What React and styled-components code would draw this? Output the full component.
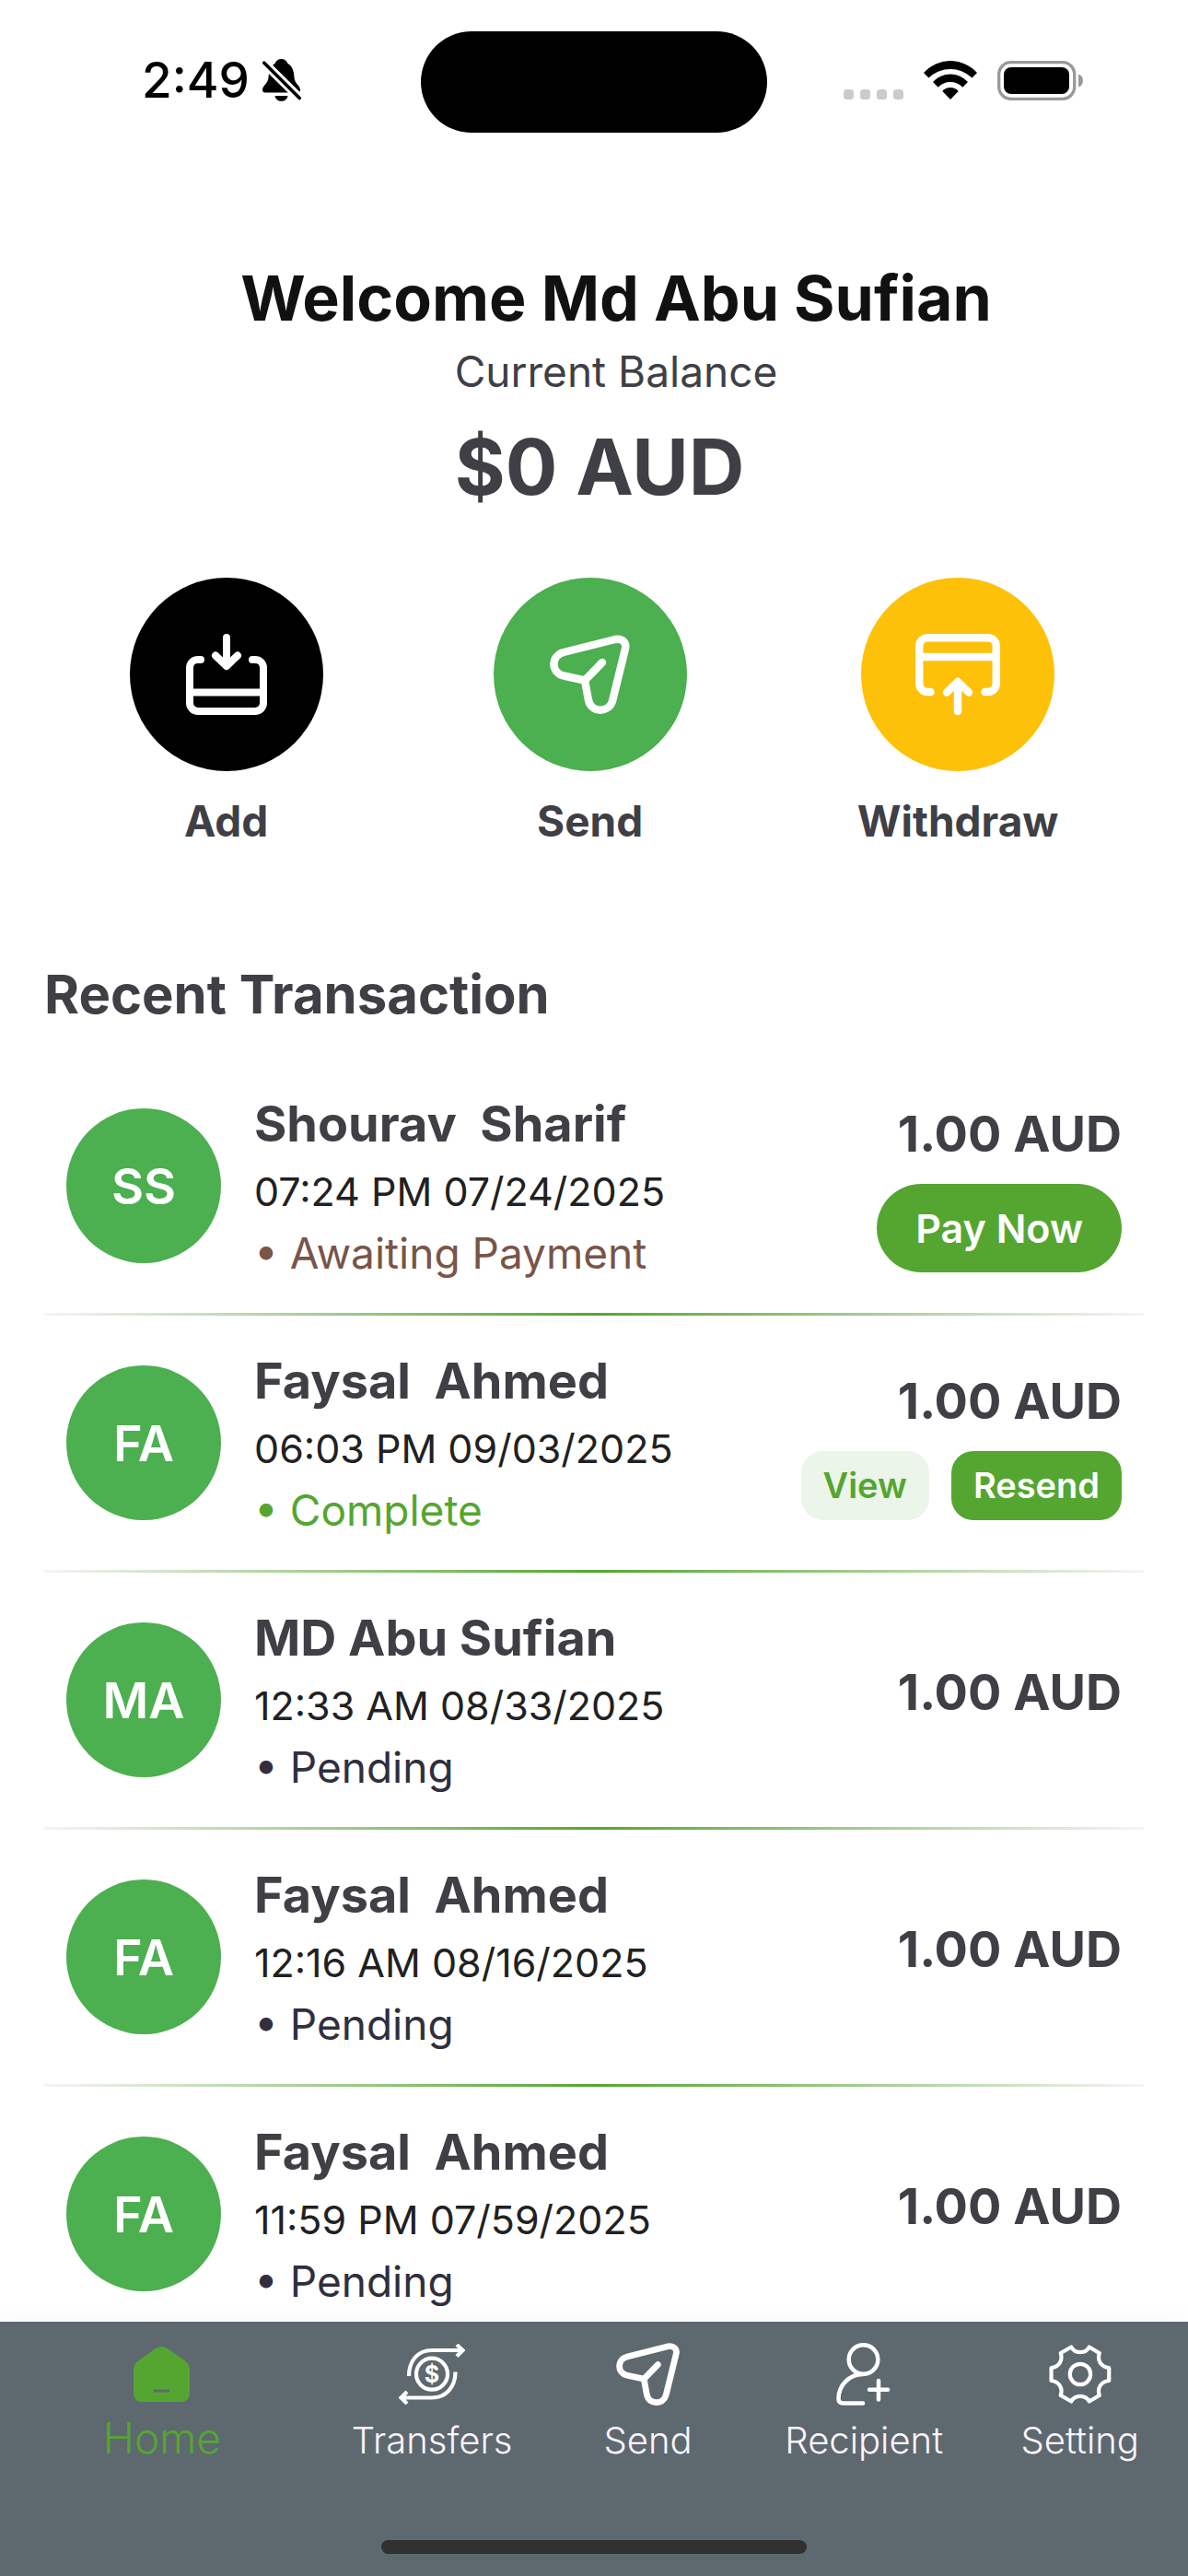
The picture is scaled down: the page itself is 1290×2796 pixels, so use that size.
import React from "react";
import styled, { createGlobalStyle } from "styled-components";

const GlobalStyle = createGlobalStyle`
  * {
    box-sizing: border-box;
  }
  body {
    margin: 0;
    background: #ffffff;
    font-family: Inter, "Liberation Sans", sans-serif;
  }
  h1, h2, h3, p, ul {
    margin: 0;
    padding: 0;
  }
  svg {
    display: block;
  }
`;

const Screen = styled.div`
  display: flex;
  flex-direction: column;
  height: 100vh;
  overflow: hidden;
  color: #3f3f46;
`;

const StatusBar = styled.header`
  display: grid;
  grid-template-columns: 1fr 376px 1fr;
  align-items: center;
  padding: 34px 0 32px;
  color: #000000;
`;

const StatusLeft = styled.div`
  display: flex;
  align-items: center;
  justify-content: flex-end;
  gap: 14px;
  padding: 0 130px 4px 0;
`;

const Clock = styled.time`
  font-size: 53px;
  line-height: 64px;
  font-weight: 500;
`;

const Island = styled.div`
  height: 110px;
  border-radius: 55px;
  background: #000000;
`;

const StatusRight = styled.div`
  display: flex;
  align-items: center;
  gap: 22px;
  padding: 0 0 4px 83px;
`;

const Content = styled.main`
  flex: 1;
  min-height: 0;
  overflow-y: auto;
  scrollbar-width: none;
`;

const Greeting = styled.section`
  display: flex;
  flex-direction: column;
  align-items: center;
  padding: 107px 0 0 48px;
`;

const Title = styled.h1`
  font-size: 68px;
  line-height: 80px;
  font-weight: 700;
  color: #111111;
  margin-bottom: 8px;
`;

const BalanceLabel = styled.p`
  font-size: 46px;
  line-height: 64px;
  margin-bottom: 16px;
`;

const BalanceValue = styled.p`
  font-size: 84px;
  line-height: 112px;
  font-weight: 700;
`;

const Actions = styled.section`
  display: flex;
  justify-content: space-around;
  padding: 64px 48px 122px;
`;

const ActionButton = styled.button`
  display: flex;
  flex-direction: column;
  align-items: center;
  gap: 24px;
  border: 0;
  padding: 0;
  background: none;
  color: inherit;
  font-family: inherit;
  font-size: 46px;
  line-height: 60px;
  font-weight: 700;
`;

const ActionCircle = styled.span`
  display: flex;
  align-items: center;
  justify-content: center;
  width: 210px;
  height: 210px;
  border-radius: 50%;
  background: ${({ $color }) => $color};
`;

const Transactions = styled.section`
  padding: 0 48px;
`;

const SectionTitle = styled.h2`
  font-size: 58px;
  line-height: 72px;
  font-weight: 700;
  margin-bottom: 34px;
`;

const List = styled.ul`
  list-style: none;
`;

const Row = styled.li`
  display: flex;
  align-items: center;
  height: 279px;
  padding: 0 24px;
  border-bottom: 3px solid;
  border-image: linear-gradient(90deg, #f5f5f5, #55a630, #f5f5f5) 1;
`;

const Avatar = styled.div`
  display: flex;
  align-items: center;
  justify-content: center;
  flex-shrink: 0;
  width: 168px;
  height: 168px;
  margin-right: 36px;
  border-radius: 50%;
  background: #4caf50;
  color: #ffffff;
  font-size: 54px;
  font-weight: 600;
`;

const Details = styled.div`
  flex: 1;
  min-width: 0;
`;

const Name = styled.h3`
  font-size: 54px;
  line-height: 76px;
  font-weight: 700;
  white-space: pre;
`;

const DateText = styled.p`
  font-size: 43px;
  line-height: 70px;
  color: #212121;
`;

const Status = styled.p`
  font-size: 46px;
  line-height: 64px;
  color: ${({ $color }) => $color};
`;

const Side = styled.div`
  display: flex;
  flex-direction: column;
  align-items: flex-end;
`;

const Amount = styled.p`
  font-size: 54px;
  line-height: 76px;
  font-weight: 700;
  padding-bottom: 16px;
`;

const ButtonGroup = styled.div`
  display: flex;
  gap: 24px;
`;

const PillButton = styled.button`
  height: 96px;
  padding: 0 42px;
  border: 0;
  border-radius: 48px;
  background: #55a630;
  color: #ffffff;
  font-family: inherit;
  font-size: 43px;
  font-weight: 600;
`;

const SmallButton = styled.button`
  height: 75px;
  padding: 0 24px;
  border: 0;
  border-radius: 24px;
  background: ${({ $soft }) => ($soft ? "#ecf5e9" : "#55a630")};
  color: ${({ $soft }) => ($soft ? "#55a630" : "#ffffff")};
  font-family: inherit;
  font-size: 38px;
  font-weight: 600;
`;

const BottomBar = styled.footer`
  background: #5d696f;
  box-shadow: 0 -4px 24px rgba(0, 0, 0, 0.03);
  padding: 21px 0 24px;
  z-index: 1;
`;

const Tabs = styled.nav`
  display: grid;
  grid-template-columns: 3fr 2fr 2fr 2fr 2fr;
  margin-bottom: 78px;
`;

const Tab = styled.a`
  display: flex;
  flex-direction: column;
  align-items: center;
  gap: 6px;
  color: ${({ $active }) => ($active ? "#55a630" : "#fdf3fd")};
  font-size: ${({ $active }) => ($active ? "46px" : "40px")};
  line-height: ${({ $active }) => ($active ? "54px" : "60px")};
  font-weight: 300;
  text-decoration: none;
`;

const TabIcon = styled.span`
  display: flex;
  align-items: center;
  justify-content: center;
  height: 72px;
`;

const HomeIndicator = styled.div`
  width: 462px;
  max-width: 60%;
  height: 15px;
  margin: 0 auto;
  border-radius: 8px;
  background: #313131;
`;

const BellOffIcon = () => (
  <svg width="42" height="46" viewBox="0 0 42 46" aria-hidden="true">
    <path
      d="M20.500 0C24 0 26.500 2 27.500 5C33 8 34 14 34.500 20C35 27 41 29 41 33.500Q41 36.500 38 36.500H3Q0 36.500 0 33.500C0 29 6 27 6.500 20C7 14 8 8 13.500 5C14.500 2 17 0 20.500 0Z"
      fill="#000"
    />
    <path d="M13.500 40H27.500C27 43.500 24 45.800 20.500 45.800S14 43.500 13.500 40Z" fill="#000" />
    <path d="M-2 0.500L42 44" stroke="#fff" strokeWidth="9.500" />
    <path d="M1.800 4.200L40.200 42.500" stroke="#000" strokeWidth="3.600" strokeLinecap="round" />
  </svg>
);

const SignalIcon = () => (
  <svg width="65" height="42" viewBox="0 0 65 42" fill="#cbcbcb" aria-hidden="true">
    <rect x="0" y="31" width="11" height="11" rx="3.500" />
    <rect x="18" y="31" width="11" height="11" rx="3.500" />
    <rect x="36" y="31" width="11" height="11" rx="3.500" />
    <rect x="54" y="31" width="11" height="11" rx="3.500" />
  </svg>
);

const WifiIcon = () => (
  <svg width="58" height="42" viewBox="0 0 58 42" fill="#000" aria-hidden="true">
    <path d="M0 13A38.800 38.800 0 0 1 58 13L52.500 18.500A33.800 33.800 0 0 0 5.500 18.500Z" />
    <path d="M10 23A25.500 25.500 0 0 1 48 23L42.300 28.700A18.400 18.400 0 0 0 15.700 28.700Z" />
    <path d="M20.300 33A11.500 11.500 0 0 1 37.700 33L29 42Z" />
  </svg>
);

const BatteryIcon = () => (
  <svg width="94" height="43" viewBox="0 0 94 43" aria-hidden="true">
    <rect x="1.700" y="1.700" width="82" height="39.600" rx="13" fill="none" stroke="#999" strokeWidth="3.300" />
    <rect x="7" y="7" width="71" height="29" rx="8" fill="#000" />
    <path d="M88 14.500C94.500 16 94.500 27 88 28.500Z" fill="#999" />
  </svg>
);

const strokeProps = {
  fill: "none",
  stroke: "#fff",
  strokeLinecap: "round",
  strokeLinejoin: "round",
  "aria-hidden": true,
};

const AddIcon = () => (
  <svg width="88" height="88" viewBox="0 0 88 88" {...strokeProps} strokeWidth="8">
    <path d="M16 28H13A9 9 0 0 0 4 36V75A9 9 0 0 0 13 84H75A9 9 0 0 0 84 75V36A9 9 0 0 0 75 28H72" />
    <path d="M4 63.500H84" />
    <path d="M44 4V34M32 23.500L44 35L56 23.500" />
  </svg>
);

const WithdrawIcon = () => (
  <svg width="92" height="88" viewBox="0 0 92 88" {...strokeProps} strokeWidth="8.500">
    <path d="M16.500 63H13A9 9 0 0 1 4.200 54V13A9 9 0 0 1 13 4.200H79A9 9 0 0 1 87.800 13V54A9 9 0 0 1 79 63H75.500" />
    <path d="M4.200 25H87.800" />
    <path d="M46 84V52M34 63.500L46 52L58 63.500" />
  </svg>
);

const SendIcon = ({ size }) => (
  <svg width={size} height={size} viewBox="0 0 88 88" {...strokeProps} strokeWidth="8.500">
    <path d="M71 6L15 20C1 24 1 42 15 45.500L38 50.500L42 72C45 86 64 86 68 73L82 16C83.500 9 78 4.500 71 6Z" />
    <path d="M38 50.500L57 31" />
  </svg>
);

const HomeIcon = () => (
  <svg width="61" height="60" viewBox="0 0 61 60" aria-hidden="true">
    <path
      d="M24 2.200Q30.500 -2 37 2.200L56 15.500Q61 19.500 61 26V50Q61 60 51 60H10Q0 60 0 50V26Q0 19.500 5 15.500Z"
      fill="#55a630"
    />
    <path d="M23 48H38" stroke="#5d696f" strokeWidth="3.200" strokeLinecap="round" />
  </svg>
);

const DollarText = styled.text`
  font-size: 25px;
  font-weight: 700;
  fill: #ffffff;
  stroke: none;
`;

const TransfersIcon = () => (
  <svg width="72" height="66" viewBox="0 0 72 66" fill="none" stroke="#fff" strokeWidth="4.200" aria-hidden="true">
    <path d="M11 35C11 19 20 7 36 7H69M63 1L69.500 7L63 13.500" />
    <path d="M61.500 30.500C61.500 46 52 58.500 36 58.500H3M9 52L2.500 58.500L9 65" />
    <circle cx="36" cy="32.700" r="17" />
    <DollarText x="36" y="42" textAnchor="middle">$</DollarText>
  </svg>
);

const RecipientIcon = () => (
  <svg width="60" height="68" viewBox="0 0 60 68" {...strokeProps} strokeWidth="4.500">
    <circle cx="29.500" cy="18" r="15.800" />
    <path d="M29.500 34C14 34 2.500 46 2.500 60.500Q2.500 65.500 7.500 65.500H29" />
    <path d="M46 41V61.500M36 50.700H56" />
  </svg>
);

const SettingIcon = () => (
  <svg width="68" height="64" viewBox="0 0 67.500 64" {...strokeProps} strokeWidth="4.200">
    <path d="M24 2.500C28 10 39.500 10 43.500 2.500L54.500 9C52 17 56 24 65 25V39C56 40 52 47 54.500 55L43.500 61.500C39.500 54 28 54 24 61.500L12.500 55C15 47 11 40 2.300 39V25C11 24 15 17 12.500 9Z" />
    <circle cx="33.700" cy="32" r="11.200" />
  </svg>
);

const actions = [
  { label: "Add", color: "#000000", icon: <AddIcon /> },
  { label: "Send", color: "#4caf50", icon: <SendIcon size={88} /> },
  { label: "Withdraw", color: "#fec109", icon: <WithdrawIcon /> },
];

const statusColors = {
  "Awaiting Payment": "#795548",
  Complete: "#55a630",
  Pending: "#312f3d",
};

const transactions = [
  { initials: "SS", name: "Shourav  Sharif", date: "07:24 PM 07/24/2025", status: "Awaiting Payment" },
  { initials: "FA", name: "Faysal  Ahmed", date: "06:03 PM 09/03/2025", status: "Complete" },
  { initials: "MA", name: "MD Abu Sufian", date: "12:33 AM 08/33/2025", status: "Pending" },
  { initials: "FA", name: "Faysal  Ahmed", date: "12:16 AM 08/16/2025", status: "Pending" },
  { initials: "FA", name: "Faysal  Ahmed", date: "11:59 PM 07/59/2025", status: "Pending" },
];

const tabs = [
  { label: "Home", icon: <HomeIcon />, active: true },
  { label: "Transfers", icon: <TransfersIcon /> },
  { label: "Send", icon: <SendIcon size={70} /> },
  { label: "Recipient", icon: <RecipientIcon /> },
  { label: "Setting", icon: <SettingIcon /> },
];

const Transaction = ({ initials, name, date, status }) => (
  <Row>
    <Avatar>{initials}</Avatar>
    <Details>
      <Name>{name}</Name>
      <DateText>{date}</DateText>
      <Status $color={statusColors[status]}>• {status}</Status>
    </Details>
    <Side>
      <Amount>1.00 AUD</Amount>
      {status === "Awaiting Payment" && <PillButton type="button">Pay Now</PillButton>}
      {status === "Complete" && (
        <ButtonGroup>
          <SmallButton type="button" $soft>View</SmallButton>
          <SmallButton type="button">Resend</SmallButton>
        </ButtonGroup>
      )}
    </Side>
  </Row>
);

const App = () => {
  return (
    <Screen>
      <GlobalStyle />
      <StatusBar>
        <StatusLeft>
          <Clock>2:49</Clock>
          <BellOffIcon />
        </StatusLeft>
        <Island />
        <StatusRight>
          <SignalIcon />
          <WifiIcon />
          <BatteryIcon />
        </StatusRight>
      </StatusBar>
      <Content>
        <Greeting>
          <Title>Welcome Md Abu Sufian</Title>
          <div>
            <BalanceLabel>Current Balance</BalanceLabel>
            <BalanceValue>$0 AUD</BalanceValue>
          </div>
        </Greeting>
        <Actions>
          {actions.map(({ label, color, icon }) => (
            <ActionButton key={label} type="button">
              <ActionCircle $color={color}>{icon}</ActionCircle>
              {label}
            </ActionButton>
          ))}
        </Actions>
        <Transactions>
          <SectionTitle>Recent Transaction</SectionTitle>
          <List>
            {transactions.map((item) => (
              <Transaction key={item.date} {...item} />
            ))}
          </List>
        </Transactions>
      </Content>
      <BottomBar>
        <Tabs>
          {tabs.map(({ label, icon, active }) => (
            <Tab key={label} href={`#${label.toLowerCase()}`} $active={active}>
              <TabIcon>{icon}</TabIcon>
              {label}
            </Tab>
          ))}
        </Tabs>
        <HomeIndicator />
      </BottomBar>
    </Screen>
  );
};

export default App;
